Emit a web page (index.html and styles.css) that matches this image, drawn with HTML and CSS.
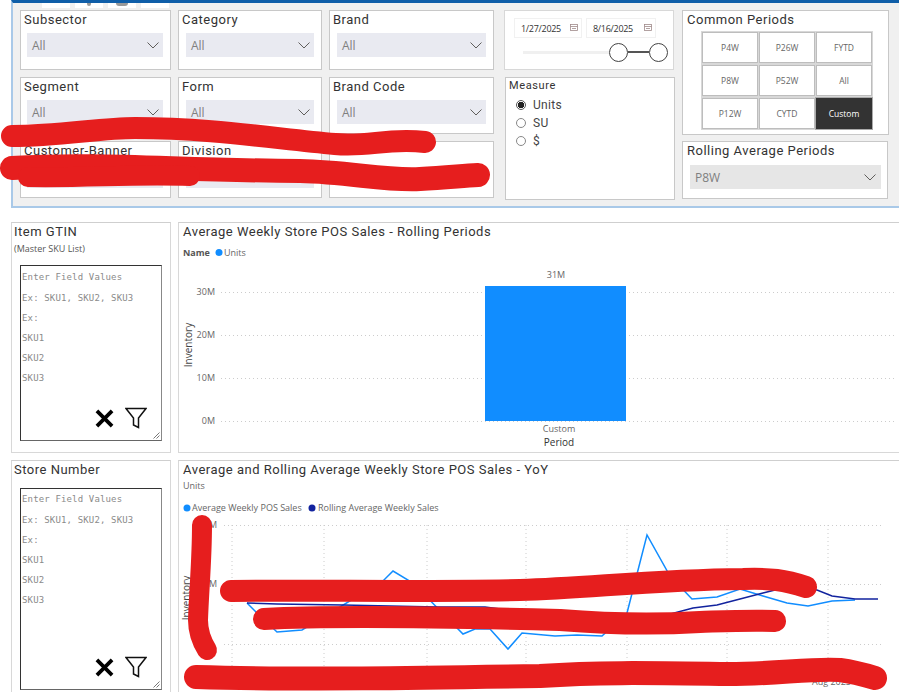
FILE: index.html
```html
<!DOCTYPE html>
<html lang="en">
<head>
<meta charset="utf-8">
<title>Store POS Sales</title>
<link rel="stylesheet" href="styles.css">
</head>
<body>
<div class="page">
  <div class="tabs"><span class="tab"></span><span class="tab"><i class="mark small"></i></span><span class="tab"><i class="mark"></i></span><span class="tab"></span></div>
  <section class="filters">
    <div class="slicer-grid">
      <div class="card slicer"><h3>Subsector</h3><div class="drop"><span>All</span><svg class="chev" viewBox="0 0 12 7"><path d="M0.5 0.5L6 6L11.5 0.5"/></svg></div></div>
      <div class="card slicer"><h3>Category</h3><div class="drop"><span>All</span><svg class="chev" viewBox="0 0 12 7"><path d="M0.5 0.5L6 6L11.5 0.5"/></svg></div></div>
      <div class="card slicer"><h3>Brand</h3><div class="drop"><span>All</span><svg class="chev" viewBox="0 0 12 7"><path d="M0.5 0.5L6 6L11.5 0.5"/></svg></div></div>
      <div class="card slicer"><h3>Segment</h3><div class="drop"><span>All</span><svg class="chev" viewBox="0 0 12 7"><path d="M0.5 0.5L6 6L11.5 0.5"/></svg></div></div>
      <div class="card slicer"><h3>Form</h3><div class="drop"><span>All</span><svg class="chev" viewBox="0 0 12 7"><path d="M0.5 0.5L6 6L11.5 0.5"/></svg></div></div>
      <div class="card slicer"><h3>Brand Code</h3><div class="drop"><span>All</span><svg class="chev" viewBox="0 0 12 7"><path d="M0.5 0.5L6 6L11.5 0.5"/></svg></div></div>
      <div class="card slicer"><h3>Customer-Banner</h3><div class="drop"><span>All</span></div></div>
      <div class="card slicer"><h3>Division</h3><div class="drop"><span>All</span></div></div>
      <div class="card slicer"></div>
    </div>
    <div class="mid-col">
      <div class="card dates">
        <div class="date-row">
          <div class="date"><span>1/27/2025</span><svg class="cal" viewBox="0 0 8 7"><rect x="0.5" y="0.5" width="7" height="6"/><path d="M0.5 2.5H7.5M2 4.5H6"/></svg></div>
          <div class="date wide"><span>8/16/2025</span><svg class="cal" viewBox="0 0 8 7"><rect x="0.5" y="0.5" width="7" height="6"/><path d="M0.5 2.5H7.5M2 4.5H6"/></svg></div>
        </div>
        <div class="slider"><div class="track"></div><div class="knob"></div><div class="range"></div><div class="knob"></div></div>
      </div>
      <div class="card measure">
        <h4>Measure</h4>
        <div class="radio"><span class="dot on"></span>Units</div>
        <div class="radio"><span class="dot"></span>SU</div>
        <div class="radio"><span class="dot"></span>$</div>
      </div>
    </div>
    <div class="right-col">
      <div class="card periods">
        <h3>Common Periods</h3>
        <div class="period-grid">
          <button class="pbtn">P4W</button><button class="pbtn">P26W</button><button class="pbtn">FYTD</button>
          <button class="pbtn">P8W</button><button class="pbtn">P52W</button><button class="pbtn">All</button>
          <button class="pbtn">P12W</button><button class="pbtn">CYTD</button><button class="pbtn active">Custom</button>
        </div>
      </div>
      <div class="card rolling">
        <h3>Rolling Average Periods</h3>
        <div class="drop grey"><span>P8W</span><svg class="chev" viewBox="0 0 12 7"><path d="M0.5 0.5L6 6L11.5 0.5"/></svg></div>
      </div>
    </div>
  </section>

  <section class="report">
    <div class="card side">
      <h3>Item GTIN</h3>
      <p class="sub">(Master SKU List)</p>
      <div class="textbox">
        <p>Enter Field Values</p><p>Ex: SKU1, SKU2, SKU3</p><p>Ex:</p><p>SKU1</p><p>SKU2</p><p>SKU3</p>
        <div class="tools">
          <svg class="x-ico" viewBox="0 0 18 18"><path d="M2.5 2.5L15.5 15.5M15.5 2.5L2.5 15.5"/></svg>
          <svg class="f-ico" viewBox="0 0 22 22"><path d="M1 1.5H21L13.5 11V20.5L8.5 18V11Z"/></svg>
        </div>
        <svg class="grip" viewBox="0 0 7 7"><path d="M0.5 6.5L6.5 0.5M3.5 6.5L6.5 3.5"/></svg>
      </div>
    </div>
    <div class="card chart">
      <h3>Average Weekly Store POS Sales - Rolling Periods</h3>
      <svg class="plot" viewBox="0 0 721 230" width="721" height="230">
        <text class="legend-b" x="4" y="33">Name</text>
        <circle cx="40" cy="29.5" r="3.5" class="c-light"/>
        <text class="legend" x="45" y="33">Units</text>
        <g class="grid">
          <path d="M42 69.5H718M42 112.5H718M42 155.5H718M42 198.5H718"/>
        </g>
        <text class="tick" x="36" y="72" text-anchor="end">30M</text>
        <text class="tick" x="36" y="115" text-anchor="end">20M</text>
        <text class="tick" x="36" y="158" text-anchor="end">10M</text>
        <text class="tick" x="36" y="201" text-anchor="end">0M</text>
        <text class="axis" transform="translate(13 122) rotate(-90)" text-anchor="middle">Inventory</text>
        <rect x="306" y="63" width="141" height="135" class="c-light"/>
        <text class="tick" x="377" y="55" text-anchor="middle">31M</text>
        <text class="tick" x="380" y="209" text-anchor="middle">Custom</text>
        <text class="axis-b" x="380" y="223" text-anchor="middle">Period</text>
      </svg>
    </div>
    <div class="card side">
      <h3>Store Number</h3>
      <div class="textbox tall">
        <p>Enter Field Values</p><p>Ex: SKU1, SKU2, SKU3</p><p>Ex:</p><p>SKU1</p><p>SKU2</p><p>SKU3</p>
        <div class="tools">
          <svg class="x-ico" viewBox="0 0 18 18"><path d="M2.5 2.5L15.5 15.5M15.5 2.5L2.5 15.5"/></svg>
          <svg class="f-ico" viewBox="0 0 22 22"><path d="M1 1.5H21L13.5 11V20.5L8.5 18V11Z"/></svg>
        </div>
        <svg class="grip" viewBox="0 0 7 7"><path d="M0.5 6.5L6.5 0.5M3.5 6.5L6.5 3.5"/></svg>
      </div>
    </div>
    <div class="card chart">
      <h3>Average and Rolling Average Weekly Store POS Sales - YoY</h3>
      <svg class="plot" viewBox="0 0 721 232" width="721" height="232">
        <text class="legend" x="4" y="28">Units</text>
        <circle cx="8" cy="47" r="3.5" class="c-light"/>
        <text class="legend" x="13" y="50">Average Weekly POS Sales</text>
        <circle cx="133" cy="47" r="3.5" class="c-dark"/>
        <text class="legend" x="139" y="50">Rolling Average Weekly Sales</text>
        <g class="grid">
          <path d="M45 64.5H705M45 123.5H705M45 183.5H705M53 64V206M145 64V206M248 64V206M347 64V206M448 64V206M548 64V206M649 64V206"/>
        </g>
        <text class="tick" x="38" y="67" text-anchor="end">40M</text>
        <text class="tick" x="38" y="126" text-anchor="end">20M</text>
        <text class="axis" transform="translate(11 137) rotate(-90)" text-anchor="middle">Inventory</text>
        <polyline class="line-light" points="68,142 78,152 98,171 123,169 204,120 214,110 234,122 284,173 296,168 311,168 329,188 343,172 376,175 398,174 423,175 448,152 468,74 491,115 513,138 538,136 561,128 584,135 608,142 629,145 653,140 676,139"/>
        <polyline class="line-dark" points="68,142 98,143 164,144 258,146 306,146 329,149 353,150 371,155 484,155 514,147 538,144 561,138 584,132 604,127 638,129 653,135 676,138 699,138"/>
        <text class="tick" x="633" y="224">Aug 2025</text>
      </svg>
    </div>
  </section>

  <svg class="scribble" viewBox="0 0 899 692" width="899" height="692">
    <path class="s22" d="M12 136C60 136 100 128 135 128C210 128 270 138 335 144C370 147 385 138 425 142"/>
    <path class="s24" d="M12 168C100 163 170 170 300 171C350 172 385 181 420 179C445 178 460 176 478 175"/>
    <path class="s20" d="M28 177C90 178 130 174 190 176"/>
    <path class="s20" d="M202 525C202 560 199 590 198 620C198 632 202 642 207 650"/>
    <path class="s22" d="M231 591C320 590 420 592 520 590C590 588 650 580 743 579C770 578 785 580 806 587"/>
    <path class="s22" d="M264 619C340 615 480 618 560 620C610 624 650 625 700 622C730 621 750 620 775 621"/>
    <path class="s24" d="M196 677C300 680 420 678 540 676C600 672 650 673 720 674C770 675 810 668 840 670C855 672 865 675 875 678"/>
  </svg>
</div>
</body>
</html>
```

FILE: styles.css
```css
* { box-sizing: border-box; }
html, body { margin: 0; padding: 0; background: #fff; }
body { width: 899px; height: 692px; overflow: hidden; font-family: "Open Sans", "Liberation Sans", sans-serif; color: #333; }
.page { position: relative; width: 899px; height: 692px; overflow: hidden; padding-left: 11px; }
h3, h4, p { margin: 0; font-weight: 400; }
.tabs { position: absolute; top: 3px; left: 42px; display: flex; gap: 5px; z-index: 2; height: 5px; }
.tab { width: 28px; background: #fff; display: flex; justify-content: center; }
.mark { width: 12px; height: 3px; background: #999; border-radius: 0 0 5px 5px; }
.mark.small { width: 4px; }
.filters { height: 208px; margin-right: -2px; background: #f0f0f0; border-top: 3px solid #0f5ea8; border-left: 2px solid #a9c9e8; border-bottom: 2px solid #a9c9e8; padding: 7px 0 0 7px; display: flex; }
.card { background: #fff; border: 1px solid #c8c8c8; }
.card h3 { font-family: Roboto, "Noto Sans", sans-serif; font-size: 13px; letter-spacing: 0.5px; color: #333; line-height: 18px; }
.slicer-grid { display: grid; grid-template-columns: 151px 144px 165px; grid-template-rows: 60px 58px 58px; column-gap: 7px; row-gap: 6px; width: 474px; }
.slicer { padding: 0 3px; }
.slicer:nth-child(n+4) { margin-top: 1px; }
.drop { margin: 4px 4px 0; height: 24px; background: #e9eaf1; display: flex; align-items: center; justify-content: space-between; padding: 0 4px 0 5px; font-size: 12px; color: #7f7f7f; }
.slicer:nth-child(3n+1) .drop { margin-left: 3px; }
.chev { width: 12px; height: 7px; fill: none; stroke: #605e5c; stroke-width: 1; }
.mid-col { width: 171px; margin-left: 10px; display: flex; flex-direction: column; gap: 7px; }
.dates { height: 60px; width: 170px; border-color: #d8d8d8; padding: 7px 5px 0 9px; }
.date-row { display: flex; gap: 4px; }
.date { width: 68px; height: 20px; border: 1px solid #f1f1f1; display: flex; align-items: center; justify-content: space-between; padding: 0 3px 0 6px; font-size: 9px; letter-spacing: -0.3px; color: #333; }
.date.wide { width: 70px; }
.cal { width: 8px; height: 7px; fill: none; stroke: #a08a8a; stroke-width: 0.8; margin-bottom: 2px; }
.slider { position: relative; display: flex; align-items: center; justify-content: flex-end; height: 20px; margin-top: 4px; }
.track { position: absolute; left: 9px; right: 59px; height: 3px; background: #f0f0f0; }
.knob { width: 19px; height: 19px; border-radius: 50%; border: 1.5px solid #444; background: #fff; }
.range { width: 21px; height: 2px; background: #555; }
.measure { width: 170px; height: 123px; margin-left: 1px; padding: 0 3px; }
.measure h4 { font-family: Roboto, "Noto Sans", sans-serif; font-size: 11px; letter-spacing: 0.6px; line-height: 15px; color: #333; }
.radio { display: flex; align-items: center; height: 18px; margin-left: 7px; font-family: Roboto, sans-serif; font-size: 12px; letter-spacing: 0.3px; color: #444; }
.radio:first-of-type { margin-top: 3px; }
.dot { width: 10px; height: 10px; border-radius: 50%; border: 1px solid #888; margin-right: 7px; background: #fff; }
.dot.on { border-color: #555; background: radial-gradient(circle, #222 0 3px, #fff 3.5px); }
.right-col { width: 207px; margin-left: 7px; display: flex; flex-direction: column; gap: 6px; }
.periods { height: 125px; padding: 0 4px; }
.period-grid { display: grid; grid-template-columns: repeat(3, 56px); grid-template-rows: repeat(3, 31px); gap: 2px 1px; margin: 3px 0 0 15px; }
.pbtn { padding: 0; background: #fff; border: 1px solid #bdbdbd; outline: 1px solid #d8d8d8; font-family: "Open Sans", sans-serif; font-size: 8.5px; color: #666; }
.pbtn.active { background: #333; color: #fff; border-color: #333; outline: 1px solid #aaa; }
.rolling { height: 58px; padding: 0 4px; width: 206px; }
.drop.grey { background: #e6e6e6; margin: 5px 2px 0 3px; height: 24px; padding: 0 5px; }
.report { display: grid; grid-template-columns: 160px 721px; grid-template-rows: 231px 240px; column-gap: 7px; row-gap: 7px; margin-top: 14px; }
.report .card { border: 0; border-top: 1px solid #cfcfcf; border-left: 1px solid #d8d8d8; border-bottom: 1px solid #d8d8d8; }
.report .side { padding: 0 2px; position: relative; border-right: 1px solid #d8d8d8; }
.chart h3 { position: absolute; margin: 0 0 0 4px; }
.chart { position: relative; }
.plot { display: block; }
.sub { font-size: 9px; color: #555; line-height: 14px; margin-top: 1px; }
.textbox { position: relative; width: 142px; height: 176px; margin: 9px 0 0 6px; border: 1px solid #333; border-right-color: #888; border-bottom-color: #666; padding: 1px 1px 0; font-family: "DejaVu Sans Mono", "Liberation Mono", monospace; font-size: 9px; letter-spacing: 0.15px; color: #8a8a8a; }
.textbox.tall { height: 202px; padding-top: 0; }
.textbox p { line-height: 20px; }
.textbox p:first-child { line-height: 21px; }
.tools { position: absolute; right: 14px; bottom: 11px; display: flex; align-items: center; gap: 10px; }
.x-ico { width: 21px; height: 21px; fill: none; stroke: #000; stroke-width: 3.2; }
.f-ico { width: 22px; height: 22px; fill: none; stroke: #111; stroke-width: 1.5; }
.grip { position: absolute; right: 1px; bottom: 1px; width: 7px; height: 7px; fill: none; stroke: #555; stroke-width: 0.8; }
.legend, .tick { font-family: "Open Sans", sans-serif; font-size: 9px; fill: #666; }
.legend-b { font-family: "Open Sans", sans-serif; font-size: 9px; font-weight: 700; fill: #555; }
.axis-b { font-family: "Open Sans", sans-serif; font-size: 10px; font-weight: 400; fill: #333; }
.axis { font-family: "Open Sans", sans-serif; font-size: 10px; fill: #444; }
.c-light { fill: #118dff; }
.c-dark { fill: #12239e; }
.grid path { fill: none; stroke: #ccc; stroke-width: 1; stroke-dasharray: 1 3; }
.line-light { fill: none; stroke: #118dff; stroke-width: 1.5; }
.line-dark { fill: none; stroke: #12239e; stroke-width: 1.5; }
.scribble { position: absolute; top: 0; left: 0; fill: none; stroke: #e61e1e; stroke-linecap: round; stroke-linejoin: round; pointer-events: none; }
.s20 { stroke-width: 20; }
.s22 { stroke-width: 22; }
.s24 { stroke-width: 24; }
```
